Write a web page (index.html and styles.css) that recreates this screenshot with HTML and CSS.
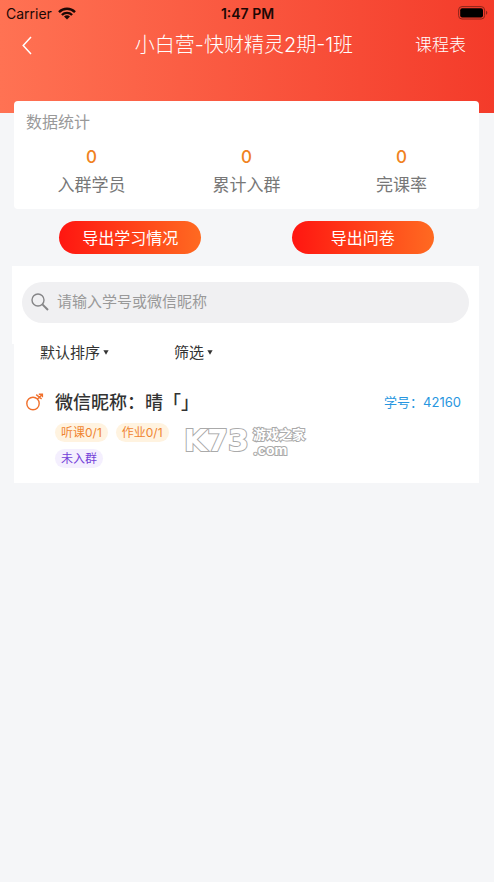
FILE: index.html
```html
<!DOCTYPE html>
<html lang="zh-CN">
<head>
<meta charset="utf-8">
<meta name="viewport" content="width=device-width, initial-scale=1">
<title>小白营-快财精灵2期-1班</title>
<link rel="stylesheet" href="styles.css">
</head>
<body>
<header class="header">
  <div class="status">
    <div class="carrier">
      <span>Carrier</span>
      <svg width="18" height="13" viewBox="0 0 18 13" aria-hidden="true">
        <g fill="none" stroke="#1c0805" stroke-width="2.4">
          <path d="M1 5.1a11.3 11.3 0 0 1 16 0"/>
          <path d="M3.9 8a7.2 7.2 0 0 1 10.2 0"/>
        </g>
        <path fill="#1c0805" d="M9 12.6 6 9.6a4.3 4.3 0 0 1 6 0z"/>
      </svg>
    </div>
    <time class="time">1:47 PM</time>
    <svg class="battery" width="31" height="14" viewBox="0 0 31 14" aria-hidden="true">
      <rect x=".6" y=".6" width="26" height="12.4" rx="3.4" fill="none" stroke="#8c251a"/>
      <rect x="2.2" y="2.2" width="22.8" height="9.2" rx="2" fill="#000"/>
      <path d="M28 4.8c1.8.6 1.8 3.4 0 4z" fill="#8c251a"/>
    </svg>
  </div>
  <nav class="nav">
    <button class="back" type="button" aria-label="返回">
      <svg width="10" height="19" viewBox="0 0 10 19" fill="none" stroke="#fff" stroke-width="1.5"><path d="M9 1 1.2 9.5 9 18"/></svg>
    </button>
    <h1 class="title">小白营-快财精灵2期-1班</h1>
    <a class="schedule" href="#">课程表</a>
  </nav>
</header>
<main class="main">
  <section class="stats">
    <h2 class="stats-title">数据统计</h2>
    <dl class="stats-row">
      <div class="stat"><dt>入群学员</dt><dd>0</dd></div>
      <div class="stat"><dt>累计入群</dt><dd>0</dd></div>
      <div class="stat"><dt>完课率</dt><dd>0</dd></div>
    </dl>
  </section>
  <div class="actions">
    <button class="export" type="button">导出学习情况</button>
    <button class="export" type="button">导出问卷</button>
  </div>
  <div class="search-panel">
    <label class="search">
      <svg width="18" height="18" viewBox="0 0 18 18" fill="none" stroke="#858587" aria-hidden="true">
        <circle cx="7" cy="7" r="6" stroke-width="1.4"/>
        <path d="m11.4 11.4 5.6 5.6" stroke-width="2"/>
      </svg>
      <input type="search" aria-label="搜索学员" placeholder="请输入学号或微信昵称">
    </label>
  </div>
  <section class="list">
    <div class="filters">
      <label class="filter">
        <select aria-label="排序"><option>默认排序</option></select>
        <svg width="6" height="5" viewBox="0 0 6 5" aria-hidden="true"><path d="M.4.3h5.2L3 4.8z" fill="#333"/></svg>
      </label>
      <label class="filter">
        <select aria-label="筛选"><option>筛选</option></select>
        <svg width="6" height="5" viewBox="0 0 6 5" aria-hidden="true"><path d="M.4.3h5.2L3 4.8z" fill="#333"/></svg>
      </label>
    </div>
    <article class="student">
      <svg class="gender" width="18" height="18" viewBox="0 0 18 18" fill="none" stroke="#f0702c" stroke-width="1.4" aria-hidden="true">
        <circle cx="7" cy="10.5" r="6.2"/>
        <path d="m11.2 6.2 5-4.6M10.2 1.6l5.4 4.4M12.8 1.2h3.6v3"/>
      </svg>
      <div class="info">
        <div class="name-row">
          <h3 class="name">微信昵称：晴「」</h3>
          <span class="number">学号：42160</span>
        </div>
        <div class="tags">
          <span class="tag">听课0/1</span>
          <span class="tag">作业0/1</span>
        </div>
        <div class="tags">
          <span class="tag tag-purple">未入群</span>
        </div>
      </div>
      <div class="watermark">
        <span class="mark">K73</span>
        <span class="mark-side"><span class="mark-name">游戏之家</span><span class="mark-domain">.com</span></span>
      </div>
    </article>
  </section>
</main>
</body>
</html>
```
FILE: styles.css
```css
* { box-sizing: border-box; }

body {
  margin: 0;
  min-height: 100vh;
  background: #f5f6f8;
  color: #333;
  font-family: Inter, "Noto Sans CJK SC", sans-serif;
  font-size: 15px;
}

h1, h2, h3, dl, dd { margin: 0; font-weight: 400; }

button, input, select {
  margin: 0;
  padding: 0;
  border: 0;
  background: none;
  color: inherit;
  font: inherit;
}

.header {
  padding-bottom: 49px;
  background: linear-gradient(90deg, #ff7253, #f43b2a);
}

.status {
  display: grid;
  grid-template-columns: 1fr auto 1fr;
  align-items: center;
  height: 26px;
  padding: 0 5px 0 6px;
  color: #1c0805;
  font-size: 14px;
}

.carrier { display: flex; align-items: center; gap: 6px; }
.time { font-weight: 600; }
.battery { justify-self: end; }

.nav {
  display: grid;
  grid-template-columns: 1fr auto 1fr;
  align-items: center;
  height: 38px;
  padding: 0 28px 0 22px;
  color: #fff;
}

.back { display: flex; justify-self: start; }
.title { font-size: 20px; font-weight: 300; line-height: 28px; }
.schedule {
  justify-self: end;
  color: #fff;
  font-size: 17px;
  font-weight: 300;
  line-height: 26px;
  text-decoration: none;
}

.main { margin: -12px 15px 0 14px; }

.stats {
  padding: 9px 0 11px;
  border-radius: 4px;
  background: #fff;
}

.stats-title {
  padding: 0 12px;
  color: #999;
  font-size: 16px;
  line-height: 24px;
}

.stats-row {
  display: grid;
  grid-template-columns: repeat(3, 1fr);
  margin-top: 10px;
}

.stat {
  display: flex;
  flex-direction: column-reverse;
  align-items: center;
  gap: 2px;
  font-size: 17px;
}

.stat dt { color: #777; line-height: 26px; }
.stat dd { color: #f08220; font-weight: 500; line-height: 26px; }

.actions {
  display: grid;
  grid-template-columns: 1fr 1fr;
  justify-items: center;
  padding: 12px 0;
}

.export {
  width: 142px;
  height: 33px;
  padding-bottom: 2px;
  border-radius: 17px;
  background: linear-gradient(90deg, #ff1611, #ff6a21);
  color: #fff;
  font-size: 16px;
}

.search-panel {
  margin-left: -2px;
  padding: 16px 10px 21px;
  background: #fff;
}

.search {
  display: flex;
  align-items: center;
  gap: 8px;
  height: 41px;
  padding: 0 9px 2px;
  border-radius: 21px;
  background: #f0f0f2;
}

.search input { flex: 1; min-width: 0; outline: 0; appearance: none; }
.search input::placeholder { color: #999; opacity: 1; }

.list { background: #fff; }

.filters { display: flex; gap: 65px; padding: 0 26px; }
.filter { display: flex; align-items: center; gap: 3px; height: 17px; }
.filter select { appearance: none; field-sizing: content; font-size: 15px; }

.student {
  position: relative;
  display: flex;
  gap: 11px;
  padding: 26px 18px 15px 12px;
}

.gender { flex: none; margin-top: 6px; }
.info { flex: 1; }

.name-row {
  display: flex;
  align-items: center;
  justify-content: space-between;
  height: 28px;
  margin-bottom: 8px;
}

.name { font-size: 18px; font-weight: 500; }
.number { color: #2796e0; font-size: 13px; }

.tags { display: flex; gap: 8px; }
.tags + .tags { margin-top: 7px; }

.tag {
  padding: 0 6px;
  border-radius: 10px;
  background: #fff3e0;
  color: #f08530;
  font-size: 12px;
  line-height: 19px;
}

.tag-purple { background: #f4effe; color: #7340d8; }

.watermark {
  position: absolute;
  top: 63px;
  left: 170px;
  display: flex;
  align-items: center;
  gap: 4px;
  color: #fff;
  font-weight: 700;
  paint-order: stroke;
  -webkit-text-stroke: 2px #aaa;
}

.mark { font-family: "DejaVu Sans", sans-serif; font-size: 30px; line-height: 34px; }
.mark-side { display: flex; flex-direction: column; }
.mark-name { font-size: 13px; line-height: 18px; }
.mark-domain { font-size: 14px; line-height: 14px; }
```
